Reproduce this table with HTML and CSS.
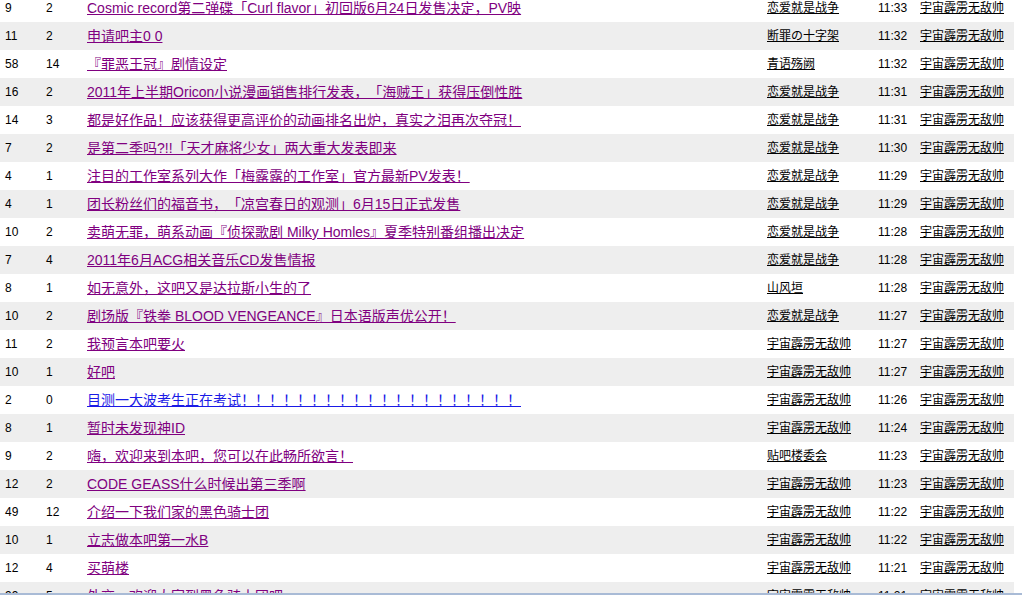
FILE: index.html
```html
<!DOCTYPE html>
<html lang="zh-CN">
<head>
<meta charset="utf-8">
<title>帖子列表</title>
<link rel="stylesheet" href="styles.css">
</head>
<body>
<table class="threads">
<colgroup>
<col class="c-reply"><col class="c-view"><col class="c-title"><col class="c-author"><col class="c-time"><col class="c-last">
</colgroup>
<tbody>
<tr><td>9</td><td>2</td><td class="title"><a class="v" href="#">Cosmic record第二弹碟「Curl flavor」初回版6月24日发售决定，PV映</a></td><td class="author"><a href="#">恋爱就是战争</a></td><td class="time">11:33</td><td class="author"><a href="#">宇宙霹雳无敌帅</a></td></tr>
<tr><td>11</td><td>2</td><td class="title"><a class="v" href="#">申请吧主0 0</a></td><td class="author"><a href="#">断罪の十字架</a></td><td class="time">11:32</td><td class="author"><a href="#">宇宙霹雳无敌帅</a></td></tr>
<tr><td>58</td><td>14</td><td class="title"><a class="v" href="#">『罪恶王冠』剧情设定</a></td><td class="author"><a href="#">青语殇阙</a></td><td class="time">11:32</td><td class="author"><a href="#">宇宙霹雳无敌帅</a></td></tr>
<tr><td>16</td><td>2</td><td class="title"><a class="v" href="#">2011年上半期Oricon小说漫画销售排行发表，「海贼王」获得压倒性胜</a></td><td class="author"><a href="#">恋爱就是战争</a></td><td class="time">11:31</td><td class="author"><a href="#">宇宙霹雳无敌帅</a></td></tr>
<tr><td>14</td><td>3</td><td class="title"><a class="v" href="#">都是好作品！应该获得更高评价的动画排名出炉，真实之泪再次夺冠！</a></td><td class="author"><a href="#">恋爱就是战争</a></td><td class="time">11:31</td><td class="author"><a href="#">宇宙霹雳无敌帅</a></td></tr>
<tr><td>7</td><td>2</td><td class="title"><a class="v" href="#">是第二季吗?!!「天才麻将少女」两大重大发表即来</a></td><td class="author"><a href="#">恋爱就是战争</a></td><td class="time">11:30</td><td class="author"><a href="#">宇宙霹雳无敌帅</a></td></tr>
<tr><td>4</td><td>1</td><td class="title"><a class="v" href="#">注目的工作室系列大作「梅露露的工作室」官方最新PV发表！</a></td><td class="author"><a href="#">恋爱就是战争</a></td><td class="time">11:29</td><td class="author"><a href="#">宇宙霹雳无敌帅</a></td></tr>
<tr><td>4</td><td>1</td><td class="title"><a class="v" href="#">团长粉丝们的福音书，「凉宫春日的观测」6月15日正式发售</a></td><td class="author"><a href="#">恋爱就是战争</a></td><td class="time">11:29</td><td class="author"><a href="#">宇宙霹雳无敌帅</a></td></tr>
<tr><td>10</td><td>2</td><td class="title"><a class="v" href="#">卖萌无罪，萌系动画『侦探歌剧 Milky Homles』夏季特别番组播出决定</a></td><td class="author"><a href="#">恋爱就是战争</a></td><td class="time">11:28</td><td class="author"><a href="#">宇宙霹雳无敌帅</a></td></tr>
<tr><td>7</td><td>4</td><td class="title"><a class="v" href="#">2011年6月ACG相关音乐CD发售情报</a></td><td class="author"><a href="#">恋爱就是战争</a></td><td class="time">11:28</td><td class="author"><a href="#">宇宙霹雳无敌帅</a></td></tr>
<tr><td>8</td><td>1</td><td class="title"><a class="v" href="#">如无意外，这吧又是达拉斯小生的了</a></td><td class="author"><span>山风垣</span></td><td class="time">11:28</td><td class="author"><a href="#">宇宙霹雳无敌帅</a></td></tr>
<tr><td>10</td><td>2</td><td class="title"><a class="v" href="#">剧场版『铁拳 BLOOD VENGEANCE』日本语版声优公开！</a></td><td class="author"><a href="#">恋爱就是战争</a></td><td class="time">11:27</td><td class="author"><a href="#">宇宙霹雳无敌帅</a></td></tr>
<tr><td>11</td><td>2</td><td class="title"><a class="v" href="#">我预言本吧要火</a></td><td class="author"><a href="#">宇宙霹雳无敌帅</a></td><td class="time">11:27</td><td class="author"><a href="#">宇宙霹雳无敌帅</a></td></tr>
<tr><td>10</td><td>1</td><td class="title"><a class="v" href="#">好吧</a></td><td class="author"><a href="#">宇宙霹雳无敌帅</a></td><td class="time">11:27</td><td class="author"><a href="#">宇宙霹雳无敌帅</a></td></tr>
<tr><td>2</td><td>0</td><td class="title"><a class="n" href="#">目测一大波考生正在考试！！！！！！！！！！！！！！！！！！！！</a></td><td class="author"><a href="#">宇宙霹雳无敌帅</a></td><td class="time">11:26</td><td class="author"><a href="#">宇宙霹雳无敌帅</a></td></tr>
<tr><td>8</td><td>1</td><td class="title"><a class="v" href="#">暂时未发现神ID</a></td><td class="author"><a href="#">宇宙霹雳无敌帅</a></td><td class="time">11:24</td><td class="author"><a href="#">宇宙霹雳无敌帅</a></td></tr>
<tr><td>9</td><td>2</td><td class="title"><a class="v" href="#">嗨，欢迎来到本吧，您可以在此畅所欲言！</a></td><td class="author"><span>贴吧楼委会</span></td><td class="time">11:23</td><td class="author"><a href="#">宇宙霹雳无敌帅</a></td></tr>
<tr><td>12</td><td>2</td><td class="title"><a class="v" href="#">CODE GEASS什么时候出第三季啊</a></td><td class="author"><a href="#">宇宙霹雳无敌帅</a></td><td class="time">11:23</td><td class="author"><a href="#">宇宙霹雳无敌帅</a></td></tr>
<tr><td>49</td><td>12</td><td class="title"><a class="v" href="#">介绍一下我们家的黑色骑士团</a></td><td class="author"><a href="#">宇宙霹雳无敌帅</a></td><td class="time">11:22</td><td class="author"><a href="#">宇宙霹雳无敌帅</a></td></tr>
<tr><td>10</td><td>1</td><td class="title"><a class="v" href="#">立志做本吧第一水B</a></td><td class="author"><a href="#">宇宙霹雳无敌帅</a></td><td class="time">11:22</td><td class="author"><a href="#">宇宙霹雳无敌帅</a></td></tr>
<tr><td>12</td><td>4</td><td class="title"><a class="v" href="#">买萌楼</a></td><td class="author"><a href="#">宇宙霹雳无敌帅</a></td><td class="time">11:21</td><td class="author"><a href="#">宇宙霹雳无敌帅</a></td></tr>
<tr><td>99</td><td>5</td><td class="title"><a class="v" href="#">外交，欢迎大家到黑色骑士团吧</a></td><td class="author"><a href="#">宇宙霹雳无敌帅</a></td><td class="time">11:21</td><td class="author"><a href="#">宇宙霹雳无敌帅</a></td></tr>
</tbody>
</table>
<div class="statusline"></div>
</body>
</html>
```
FILE: styles.css
```css
html, body {
  margin: 0;
  padding: 0;
  background: #ffffff;
  overflow: hidden;
}

body {
  font-family: "Liberation Sans", "Noto Sans CJK SC", sans-serif;
  font-size: 12px;
  color: #000000;
  text-spacing-trim: space-all;
}

.threads {
  width: 1014px;
  border-collapse: collapse;
  table-layout: fixed;
  margin-top: -6px;
}

.c-reply { width: 41px; }
.c-view { width: 41px; }
.c-title { width: 680px; }
.c-author { width: 111px; }
.c-time { width: 42px; }
.c-last { width: 99px; }

.threads tr {
  height: 28px;
}

.threads tr:nth-child(even) {
  background: #eeeeee;
}

.threads td {
  padding: 0 0 0 5px;
  height: 28px;
  line-height: 14px;
  vertical-align: middle;
  white-space: nowrap;
  overflow: hidden;
  font-size: 12px;
}

.threads td.title {
  font-size: 14px;
  line-height: 16px;
}

.title a {
  text-decoration: underline;
}

.title a.v {
  color: #800080;
}

.title a.n {
  color: #1a1ae6;
}

.author a,
.author span {
  color: #000000;
  text-decoration: underline;
}

.time {
  color: #000000;
}

.statusline {
  position: fixed;
  left: 0;
  right: 0;
  bottom: 0;
  height: 2px;
  background: #a9bbd6;
}
```
